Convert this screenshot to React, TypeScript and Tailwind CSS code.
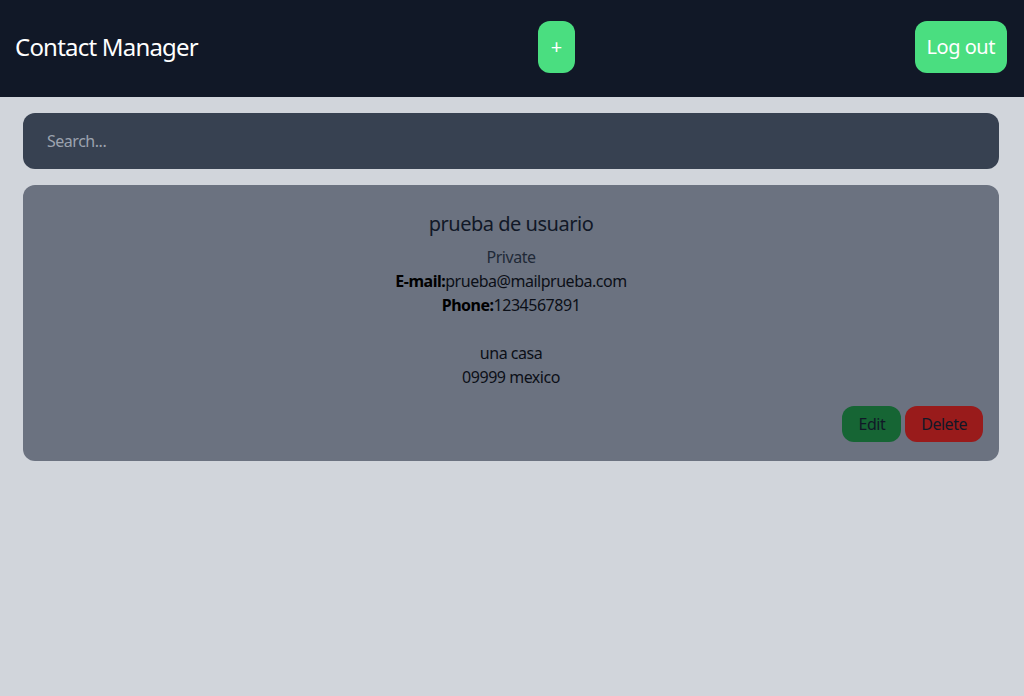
import React from "react";

export default function App() {
  return (
    <div className="min-h-[696px] bg-[#d1d5db] tracking-[-0.03em]" style={{ fontFamily: '"Noto Sans", "Open Sans", sans-serif' }}>
      <header className="flex items-center justify-between bg-[#111827] pl-[15px] pr-[17px] pt-[21px] pb-[24px]">
        <h1 className="text-2xl tracking-[-0.033em] text-white">Contact Manager</h1>
        <button className="rounded-xl bg-[#4ade80] px-[13px] py-3 text-xl text-white">+</button>
        <button className="rounded-xl bg-[#4ade80] px-3 py-3 text-xl text-white">Log out</button>
      </header>
      <main className="flex flex-col gap-4 pl-[23px] pr-[25px] pt-4">
        <input
          type="text"
          placeholder="Search..."
          className="w-full rounded-xl bg-[#374151] px-6 py-4 text-base text-white placeholder:text-[#9ca3af] outline-none"
        />
        <div className="flex flex-col rounded-xl bg-[#6b7280] px-4 pt-[25px] pb-[19px]">
          <div className="flex flex-col items-center text-base text-[#0b0f17]">
            <h2 className="mb-[7px] text-xl text-[#111827]">prueba de usuario</h2>
            <p className="text-[#1f2937]">Private</p>
            <p>
              <span className="font-bold text-black">E-mail:</span>prueba@mailprueba.com
            </p>
            <p>
              <span className="font-bold text-black">Phone:</span>1234567891
            </p>
            <p className="h-6"></p>
            <p>una casa</p>
            <p>09999 mexico</p>
          </div>
          <div className="mt-[17px] flex justify-end gap-1">
            <button className="rounded-xl bg-[#166534] px-4 py-1.5 text-base text-[#111827]">Edit</button>
            <button className="rounded-xl bg-[#991b1b] px-4 py-1.5 text-base text-[#111827]">Delete</button>
          </div>
        </div>
      </main>
    </div>
  );
}
